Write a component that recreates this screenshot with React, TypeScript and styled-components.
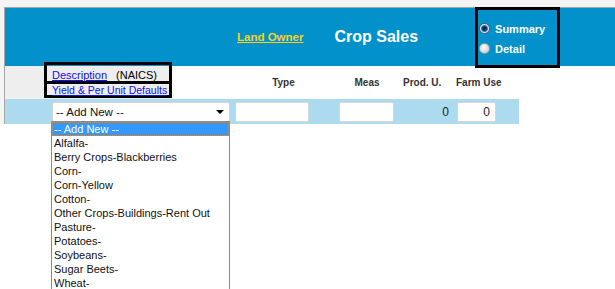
import React from "react";
import styled, { createGlobalStyle } from "styled-components";

const GlobalStyle = createGlobalStyle`
  html, body { margin: 0; padding: 0; background: #ffffff; }
  body { font-family: "Liberation Sans", Arial, sans-serif; }
  * { box-sizing: border-box; }
`;

const Page = styled.div`
  width: 615px;
  height: 289px;
  overflow: hidden;
  background: #ffffff;
`;

const TopArea = styled.div`
  background: #f4f4f4;
  padding: 7px 0 0 4px;
`;

const Frame = styled.div`
  border-top: 1px solid #a6a6a6;
  border-left: 1px solid #a6a6a6;
  background: #ffffff;
`;

const TitleBar = styled.div`
  height: 58px;
  background: #0391cc;
  display: flex;
  align-items: center;
  padding-left: 232px;
`;

const OwnerLink = styled.a`
  color: #f6d31a;
  font-weight: bold;
  font-size: 11.5px;
  text-decoration: underline;
  margin-right: 31px;
  cursor: pointer;
`;

const Title = styled.h1`
  margin: 0 57px 1px 0;
  color: #ffffff;
  font-size: 16px;
  font-weight: bold;
`;

const RadioBox = styled.div`
  width: 85px;
  height: 61px;
  border: 3px solid #000000;
  display: flex;
  flex-direction: column;
  justify-content: center;
  padding: 3px 0 0 1px;
`;

const RadioRow = styled.label`
  display: flex;
  align-items: center;
  gap: 5px;
  height: 20px;
  color: #ffffff;
  font-size: 11px;
  font-weight: bold;
`;

const RadioDot = styled.span<{ $checked?: boolean }>`
  width: 11px;
  height: 11px;
  border-radius: 50%;
  border: 1px solid ${(p) => (p.$checked ? "#4d6275" : "#9aa3ab")};
  background: ${(p) =>
    p.$checked
      ? "radial-gradient(circle at 50% 50%, #0b2f5a 0 2px, #3c7bb8 3px, #dfe8f0 4px)"
      : "radial-gradient(circle at 40% 35%, #ffffff 0, #e4e4e4 45%, #bcbcbc 100%)"};
`;

const Grid = styled.div`
  display: grid;
  grid-template-columns: 227px 103px 64px 54px 66px;
`;

const HeaderRow = styled(Grid)`
  height: 33px;
`;

const HeadLabel = styled.div<{ $align?: string; $pad?: number }>`
  display: flex;
  align-items: center;
  justify-content: ${(p) => p.$align || "center"};
  padding-left: ${(p) => p.$pad || 0}px;
  font-size: 10px;
  font-weight: bold;
  color: #333333;
`;

const DescCell = styled.div`
  width: 167px;
  height: 33px;
  background: #eeeeee;
  padding-left: 39px;
`;

const DescBox = styled.div`
  position: relative;
  z-index: 2;
  margin-top: -4px;
  width: 128px;
  height: 36px;
  border: 3px solid #000000;
  display: flex;
  flex-direction: column;
  line-height: 12px;
  white-space: nowrap;
  color: #000000;
`;

const DescLine = styled.div<{ $first?: boolean }>`
  height: ${(p) => (p.$first ? 19 : 11)}px;
  padding: ${(p) => (p.$first ? 4 : 0)}px 0 0 5px;
  border-bottom: ${(p) => (p.$first ? "3px solid #000000" : "none")};
  font-size: ${(p) => (p.$first ? 11 : 10.5)}px;
`;

const Link = styled.a`
  color: #1010f0;
  text-decoration: underline;
  cursor: pointer;
`;

const Naics = styled.span`
  margin-left: 9px;
`;

const DataRow = styled(Grid)`
  height: 25px;
  width: 514px;
  background: #acdbef;
`;

const Cell = styled.div<{ $pad?: number; $right?: boolean }>`
  position: relative;
  display: flex;
  align-items: center;
  justify-content: ${(p) => (p.$right ? "flex-end" : "flex-start")};
  padding-left: ${(p) => (p.$right ? 0 : p.$pad || 0)}px;
  padding-right: ${(p) => (p.$right ? p.$pad || 0 : 0)}px;
  font-size: 12px;
  color: #222222;
`;

const SelectBox = styled.div`
  width: 178px;
  height: 20px;
  background: #ffffff;
  border: 1px solid #d4d4d4;
  border-radius: 2px;
  display: flex;
  align-items: center;
  justify-content: space-between;
  padding: 0 5px 0 3px;
  font-size: 11.5px;
  color: #111111;
`;

const Arrow = styled.span`
  width: 0;
  height: 0;
  border-left: 4px solid transparent;
  border-right: 4px solid transparent;
  border-top: 4px solid #000000;
  margin-top: 1px;
`;

const TextInput = styled.input<{ $w: number }>`
  width: ${(p) => p.$w}px;
  height: 20px;
  border: 1px solid #d6d6d6;
  border-radius: 2px;
  background: #ffffff;
  font-family: "Liberation Sans", Arial, sans-serif;
  font-size: 12px;
  color: #222222;
  text-align: right;
  padding: 0 5px 0 2px;
  outline: none;
`;

const DropList = styled.ul`
  position: absolute;
  left: 46px;
  top: 22px;
  width: 179px;
  margin: 0;
  padding: 0;
  list-style: none;
  background: #ffffff;
  border: 1px solid #8a8a8a;
  border-bottom: none;
  z-index: 5;
`;

const DropItem = styled.li<{ $active?: boolean }>`
  height: 14px;
  line-height: 14px;
  padding-left: 2px;
  font-size: 11px;
  white-space: nowrap;
  color: ${(p) => (p.$active ? "#ffffff" : "#111111")};
  background: ${(p) => (p.$active ? "#3399ff" : "transparent")};
  outline: ${(p) => (p.$active ? "1px dotted #d98a3a" : "none")};
  outline-offset: -1px;
`;

const crops = [
  "-- Add New --",
  "Alfalfa-",
  "Berry Crops-Blackberries",
  "Corn-",
  "Corn-Yellow",
  "Cotton-",
  "Other Crops-Buildings-Rent Out",
  "Pasture-",
  "Potatoes-",
  "Soybeans-",
  "Sugar Beets-",
  "Wheat-",
];

export default function App() {
  return (
    <Page>
      <GlobalStyle />
      <TopArea>
        <Frame>
          <TitleBar>
            <OwnerLink>Land Owner</OwnerLink>
            <Title>Crop Sales</Title>
            <RadioBox>
              <RadioRow>
                <RadioDot $checked />
                Summary
              </RadioRow>
              <RadioRow>
                <RadioDot />
                Detail
              </RadioRow>
            </RadioBox>
          </TitleBar>
          <HeaderRow>
            <DescCell>
              <DescBox>
                <DescLine $first>
                  <Link>Description</Link>
                  <Naics>(NAICS)</Naics>
                </DescLine>
                <DescLine>
                  <Link>Yield &amp; Per Unit Defaults</Link>
                </DescLine>
              </DescBox>
            </DescCell>
            <HeadLabel>Type</HeadLabel>
            <HeadLabel>Meas</HeadLabel>
            <HeadLabel $align="flex-start" $pad={4}>Prod. U.</HeadLabel>
            <HeadLabel $align="flex-start" $pad={3}>Farm Use</HeadLabel>
          </HeaderRow>
          <DataRow>
            <Cell $pad={47}>
              <SelectBox>
                <span>-- Add New --</span>
                <Arrow />
              </SelectBox>
              <DropList>
                {crops.map((c, i) => (
                  <DropItem key={c} $active={i === 0}>
                    {c}
                  </DropItem>
                ))}
              </DropList>
            </Cell>
            <Cell $pad={3}>
              <TextInput $w={74} defaultValue="" />
            </Cell>
            <Cell $pad={4}>
              <TextInput $w={55} defaultValue="" />
            </Cell>
            <Cell $right $pad={4}>
              0
            </Cell>
            <Cell $pad={4}>
              <TextInput $w={39} defaultValue="0" />
            </Cell>
          </DataRow>
        </Frame>
      </TopArea>
    </Page>
  );
}
